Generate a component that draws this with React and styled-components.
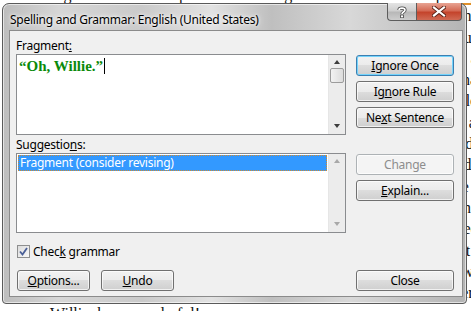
import React from "react";
import styled, { createGlobalStyle, css } from "styled-components";

const GlobalStyle = createGlobalStyle`
  html, body {
    margin: 0;
    padding: 0;
  }
  body {
    width: 471px;
    height: 311px;
    overflow: hidden;
    background: #ffffff;
    font-family: "Segoe UI", "Noto Sans", sans-serif;
    font-size: 12px;
    letter-spacing: -0.25px;
  }
`;

const Desktop = styled.div`
  position: relative;
  width: 471px;
  height: 311px;
  overflow: hidden;
  background: #ffffff;
`;

const Doc = styled.div`
  font-family: "Liberation Serif", serif;
  font-size: 16px;
  line-height: 21.3px;
  letter-spacing: 0;
  color: #111;
  transform: translateY(-16px);
`;

const DocLine = styled.p`
  margin: 0;
  padding-left: ${(p) => p.$indent}px;
  white-space: nowrap;
`;

const Squiggle = styled.span`
  border-bottom: 2px solid #e0902a;
`;

const Window = styled.div`
  position: absolute;
  z-index: 2;
  left: 2px;
  top: 3px;
  width: 465px;
  height: 301px;
  box-sizing: border-box;
  display: flex;
  flex-direction: column;
  border: 1px solid #5a5a5a;
  border-radius: 7px 7px 4px 4px;
  background-color: #cccccc;
  background-image: linear-gradient(
    90deg,
    #bdbdbd 0%,
    #d6d6d6 12%,
    #cacaca 30%,
    #e2e2e2 45%,
    #bfbfbf 58%,
    #d8d8d8 75%,
    #c2c2c2 90%,
    #b4b4b4 100%
  );
  box-shadow: inset 0 0 0 1px rgba(255, 255, 255, 0.6);
  padding: 0 3px 6px 6px;
`;

const TitleBar = styled.div`
  height: 28px;
  display: flex;
  align-items: flex-start;
  justify-content: space-between;
`;

const Title = styled.div`
  margin-top: 7px;
  padding-left: 1px;
  color: #000;
  font-size: 12px;
  text-shadow: 0 0 6px #fff, 0 0 3px #fff;
`;

const Caption = styled.div`
  display: flex;
  margin-top: -1px;
  margin-right: 1px;
`;

const CaptionButton = styled.div`
  height: 18px;
  box-sizing: border-box;
  border: 1px solid #5d5d5d;
  border-top: none;
  display: flex;
  align-items: center;
  justify-content: center;
  ${(p) =>
    p.$close
      ? css`
          width: 46px;
          border-radius: 0 0 4px 0;
          background: linear-gradient(180deg, #e8a493 0%, #d46a55 45%, #c4442c 55%, #d06a54 100%);
        `
      : css`
          width: 29px;
          border-right: none;
          border-radius: 0 0 0 4px;
          background: linear-gradient(180deg, #e4e4e4 0%, #cfcfcf 45%, #b8b8b8 55%, #cdcdcd 100%);
        `}
`;

const Client = styled.div`
  flex: 1;
  box-sizing: border-box;
  border: 1px solid #8b8b8b;
  background: #f0f0f0;
  padding: 7px 8px 5px 6px;
  display: flex;
  flex-direction: column;
`;

const Section = styled.div`
  display: flex;
  gap: 10px;
  & + & {
    margin-top: 2px;
  }
`;

const LeftCol = styled.div`
  width: 330px;
  display: flex;
  flex-direction: column;
`;

const RightCol = styled.div`
  width: 98px;
  display: flex;
  flex-direction: column;
  gap: 5px;
  padding-top: 17px;
`;

const Label = styled.div`
  height: 16px;
  line-height: 16px;
  color: #000;
`;

const Key = styled.span`
  text-decoration: underline;
  text-underline-offset: 1px;
`;

const Box = styled.div`
  height: ${(p) => p.$h}px;
  box-sizing: border-box;
  border: 1px solid #8a8c8f;
  background: #fff;
  display: flex;
`;

const BoxContent = styled.div`
  flex: 1;
  padding: ${(p) => p.$pad};
`;

const FragmentText = styled.span`
  font-family: "Liberation Serif", serif;
  font-weight: bold;
  font-size: 15px;
  line-height: 18px;
  letter-spacing: 0;
  color: #0a8a0a;
  border-right: 1px solid #000;
  padding-right: 1px;
`;

const Scrollbar = styled.div`
  width: 17px;
  background: #ececec;
  border-left: 1px solid #e6e6e6;
  display: flex;
  flex-direction: column;
  align-items: center;
  justify-content: space-between;
  padding: 5px 0 6px;
  box-sizing: border-box;
`;

const Arrow = styled.div`
  width: 0;
  height: 0;
  border-left: 3.5px solid transparent;
  border-right: 3.5px solid transparent;
  ${(p) =>
    p.$down
      ? css`border-top: 4px solid ${p.$dim ? "#a8a8a8" : "#3c3c3c"};`
      : css`border-bottom: 4px solid ${p.$dim ? "#a8a8a8" : "#3c3c3c"};`}
`;

const Track = styled.div`
  flex: 1;
  align-self: stretch;
  padding: 4px 1px 0 1px;
`;

const Thumb = styled.div`
  height: 13px;
  border: 1px solid #9b9b9b;
  border-radius: 2px;
  background: linear-gradient(90deg, #f2f2f2, #dcdcdc);
`;

const Selected = styled.div`
  height: 16px;
  box-sizing: border-box;
  background: #3399ff;
  border: 1px dotted #d08a30;
  color: #fff;
  line-height: 14px;
  padding-left: 1px;
`;

const Button = styled.div`
  height: 21px;
  box-sizing: border-box;
  border: 1px solid ${(p) => (p.$default ? "#3c7fb1" : p.$disabled ? "#adb2b5" : "#707070")};
  border-radius: 3px;
  display: flex;
  align-items: center;
  justify-content: center;
  color: ${(p) => (p.$disabled ? "#8d8d8d" : "#000")};
  width: ${(p) => (p.$w ? `${p.$w}px` : "auto")};
  background: ${(p) =>
    p.$disabled
      ? "#f4f4f4"
      : "linear-gradient(180deg, #f2f2f2 0%, #ebebeb 50%, #dddddd 50%, #cfcfcf 100%)"};
  box-shadow: inset 0 0 0 1px ${(p) => (p.$default ? "#74d4fc" : "rgba(255, 255, 255, 0.7)")};
`;

const CheckRow = styled.div`
  margin-top: 12px;
  height: 13px;
  display: flex;
  align-items: center;
  gap: 3px;
  padding-left: 1px;
`;

const CheckBox = styled.div`
  width: 13px;
  height: 13px;
  box-sizing: border-box;
  border: 1px solid #8e8f8f;
  background: linear-gradient(135deg, #dcdcdc, #f8f8f8);
  display: flex;
  align-items: center;
  justify-content: center;
`;

const BottomRow = styled.div`
  margin-top: 12px;
  display: flex;
  gap: 11px;
  padding-left: 1px;
`;

const Spacer = styled.div`
  flex: 1;
`;

const docLines = [
  [40, "the grammar checker pointed out a fragment and she read the passage again slowly to see"],
  [20, "what she had written about the old house on the hill and the people who lived there long ago"],
  [20, "and the garden where the roses climbed the walls each summer without fail, blue and white"],
  [20, "she had always thought of it as a place where nothing ever changed at all, not even once"],
  [20, "until the day her brother came home from the city with a letter in his hand for mother"],
  [20, "nobody spoke at dinner that evening and the clock in the hall seemed louder than before"],
  [20, "the next morning she found him sitting on the porch steps, staring out at the long road"],
  [20, "he did not look up when she came out, but he moved over so she could sit down next to him"],
  [20, "they sat together for a long while as the sun climbed over the trees and the birds sang"],
  [20, "finally he told her everything, and she listened without saying a single word to him"],
  [20, "when he was finished she took his hand and held it for a moment, then she stood up"],
  [20, "she walked back into the house and up the stairs to her room and closed the door softly"],
  [20, "from the window she could see him still there, small and alone against the bright fields"],
  [20, "she opened her notebook and began to write the words that had been waiting in her head"],
  [20, "“Oh, Willie.” she wrote, and then she stopped and looked at it for a very long time"],
  [50, "Willie, how wonderful!"],
];

export default function App() {
  return (
    <>
      <GlobalStyle />
      <Desktop>
        <Doc>
          {docLines.map(([indent, text], i) => (
            <DocLine key={i} $indent={indent}>
              {i === 0 ? <Squiggle>{text}</Squiggle> : text}
            </DocLine>
          ))}
        </Doc>
        <Window>
          <TitleBar>
            <Title>Spelling and Grammar: English (United States)</Title>
            <Caption>
              <CaptionButton>
                <svg width="10" height="12" viewBox="0 0 10 12">
                  <path
                    d="M2 4 C2 1.5 8 1.5 8 4 C8 6 5 6 5 8"
                    fill="none"
                    stroke="#444"
                    strokeWidth="3.2"
                  />
                  <path
                    d="M2 4 C2 1.5 8 1.5 8 4 C8 6 5 6 5 8"
                    fill="none"
                    stroke="#fff"
                    strokeWidth="1.6"
                  />
                  <rect x="3.6" y="9" width="2.8" height="2.8" fill="#fff" stroke="#444" strokeWidth="0.8" />
                </svg>
              </CaptionButton>
              <CaptionButton $close>
                <svg width="14" height="11" viewBox="0 0 14 11">
                  <path d="M2 1.5 L12 9.5 M12 1.5 L2 9.5" stroke="#5a2318" strokeWidth="4" strokeLinecap="square" />
                  <path d="M2 1.5 L12 9.5 M12 1.5 L2 9.5" stroke="#fff" strokeWidth="2.2" strokeLinecap="square" />
                </svg>
              </CaptionButton>
            </Caption>
          </TitleBar>
          <Client>
            <Section>
              <LeftCol>
                <Label>
                  Fragment<Key>:</Key>
                </Label>
                <Box $h={81}>
                  <BoxContent $pad="2px 2px 0 2px">
                    <FragmentText>“Oh, Willie.”</FragmentText>
                  </BoxContent>
                  <Scrollbar>
                    <Arrow />
                    <Track>
                      <Thumb />
                    </Track>
                    <Arrow $down />
                  </Scrollbar>
                </Box>
              </LeftCol>
              <RightCol>
                <Button $default>
                  <span>
                    <Key>I</Key>gnore Once
                  </span>
                </Button>
                <Button>
                  <span>
                    Ig<Key>n</Key>ore Rule
                  </span>
                </Button>
                <Button>
                  <span>
                    Ne<Key>x</Key>t Sentence
                  </span>
                </Button>
              </RightCol>
            </Section>
            <Section>
              <LeftCol>
                <Label>
                  Suggestio<Key>n</Key>s:
                </Label>
                <Box $h={80}>
                  <BoxContent $pad="1px 1px 0 1px">
                    <Selected>Fragment (consider revising)</Selected>
                  </BoxContent>
                  <Scrollbar>
                    <Arrow $dim />
                    <Arrow $down $dim />
                  </Scrollbar>
                </Box>
              </LeftCol>
              <RightCol>
                <Button $disabled>Change</Button>
                <Button>
                  <span>
                    <Key>E</Key>xplain...
                  </span>
                </Button>
              </RightCol>
            </Section>
            <CheckRow>
              <CheckBox>
                <svg width="9" height="9" viewBox="0 0 9 9">
                  <path d="M1 4.5 L3.5 7.5 L8 1" fill="none" stroke="#4a5f97" strokeWidth="1.8" />
                </svg>
              </CheckBox>
              <span>
                Chec<Key>k</Key> grammar
              </span>
            </CheckRow>
            <BottomRow>
              <Button $w={73}>
                <span>
                  <Key>O</Key>ptions...
                </span>
              </Button>
              <Button $w={73}>
                <span>
                  <Key>U</Key>ndo
                </span>
              </Button>
              <Spacer />
              <Button $w={98}>Close</Button>
            </BottomRow>
          </Client>
        </Window>
      </Desktop>
    </>
  );
}
